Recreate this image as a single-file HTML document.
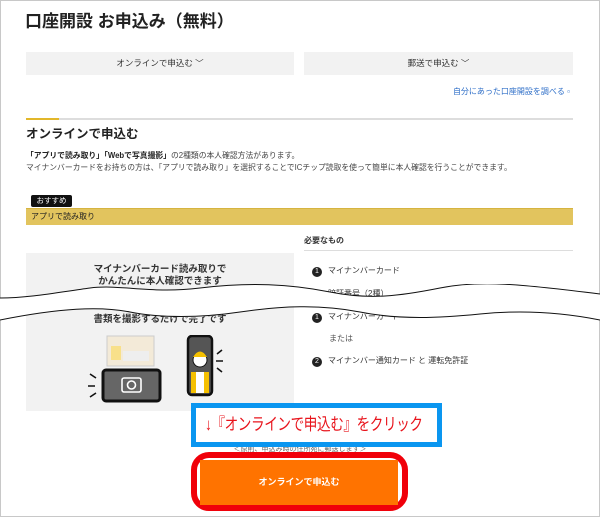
<!DOCTYPE html>
<html><head><meta charset="utf-8"><style>
*{margin:0;padding:0;box-sizing:border-box}
body{width:600px;height:517px;overflow:hidden;background:#fff;font-family:"Liberation Sans","Noto Sans CJK JP",sans-serif;color:#222;position:relative}
.a{position:absolute}
</style></head><body>
<div class="a" style="left:0;top:0;width:600px;height:517px;border:1px solid #c8c8c8"></div>
<div class="a" style="left:25px;top:7px;font-size:17px;font-weight:bold;color:#222">口座開設 お申込み（無料）</div>
<div class="a" style="left:26px;top:52px;width:268px;height:23px;background:#f2f2f2;font-size:8.5px;text-align:center;line-height:23px;color:#333">オンラインで申込む ﹀</div>
<div class="a" style="left:304px;top:52px;width:269px;height:23px;background:#f2f2f2;font-size:8.5px;text-align:center;line-height:23px;color:#333">郵送で申込む ﹀</div>
<div class="a" style="left:420px;top:86px;width:150px;text-align:right;font-size:8px;color:#2f6fc8">自分にあった口座開設を調べる ▫</div>
<div class="a" style="left:26px;top:118px;width:547px;height:2px;background:#ddd"></div>
<div class="a" style="left:26px;top:118px;width:33px;height:2px;background:#e2b72a"></div>
<div class="a" style="left:26px;top:123px;font-size:12.5px;font-weight:bold">オンラインで申込む</div>
<div class="a" style="left:26px;top:150px;font-size:7.8px;line-height:12px;color:#444"><b style="color:#222">「アプリで読み取り」「Webで写真撮影」</b>の2種類の本人確認方法があります。<br>マイナンバーカードをお持ちの方は、「アプリで読み取り」を選択することでICチップ読取を使って簡単に本人確認を行うことができます。</div>
<div class="a" style="left:31px;top:195px;width:41px;height:12px;background:#111;border-radius:2px;color:#fff;font-size:7.5px;text-align:center;line-height:12px">おすすめ</div>
<div class="a" style="left:26px;top:208px;width:547px;height:17px;background:#e2c45e;border-top:1px solid #d6b440;font-size:8px;line-height:16px;padding-left:5px">アプリで読み取り</div>
<div class="a" style="left:304px;top:235px;font-size:8px;font-weight:bold;color:#333">必要なもの</div>
<div class="a" style="left:304px;top:250px;width:269px;height:1px;background:#ddd"></div>
<div class="a" style="left:26px;top:253px;width:268px;height:158px;background:#f2f2f2"></div>
<div class="a" style="left:26px;top:264px;width:268px;text-align:center;font-size:9.5px;font-weight:bold;line-height:12px;color:#333">マイナンバーカード読み取りで<br>かんたんに本人確認できます</div>
<div class="a" style="left:26px;top:311px;width:268px;text-align:center;font-size:9.5px;font-weight:bold;color:#333">書類を撮影するだけで完了です</div>
<div class="a" style="left:312px;top:265px;font-size:8px;color:#333;line-height:11px"><span style="display:inline-block;width:10px;height:10px;border-radius:50%;background:#222;color:#fff;font-size:7px;text-align:center;line-height:10px;margin-right:6px">1</span>マイナンバーカード</div>
<div class="a" style="left:312px;top:288px;font-size:8px;color:#333;line-height:11px"><span style="display:inline-block;width:10px;height:10px;border-radius:50%;background:#222;color:#fff;font-size:7px;text-align:center;line-height:10px;margin-right:6px">2</span>暗証番号（2種）</div>
<div class="a" style="left:312px;top:311px;font-size:8px;color:#333;line-height:11px"><span style="display:inline-block;width:10px;height:10px;border-radius:50%;background:#222;color:#fff;font-size:7px;text-align:center;line-height:10px;margin-right:6px">1</span>マイナンバーカード</div>
<div class="a" style="left:329px;top:333px;font-size:8px;color:#555">または</div>
<div class="a" style="left:312px;top:355px;font-size:8px;color:#333;line-height:11px"><span style="display:inline-block;width:10px;height:10px;border-radius:50%;background:#222;color:#fff;font-size:7px;text-align:center;line-height:10px;margin-right:6px">2</span>マイナンバー通知カード と 運転免許証</div>
<svg class="a" style="left:80px;top:335px" width="170" height="70">
<rect x="27" y="1" width="47" height="30" fill="#f3ead8" stroke="#ccc"/>
<rect x="31" y="11" width="10" height="14" fill="#f8e08a"/>
<rect x="43" y="16" width="26" height="10" fill="#eee"/>
<rect x="23" y="35" width="57" height="31" rx="3" fill="#666" stroke="#111" stroke-width="3"/>
<rect x="42" y="43" width="19" height="14" rx="2" fill="none" stroke="#fff" stroke-width="1.6"/>
<circle cx="51.5" cy="50" r="4" fill="none" stroke="#fff" stroke-width="1.6"/>
<path d="M10 39l6 4M8 51h7M10 62l6-4" stroke="#111" stroke-width="1.6"/>
<rect x="108" y="1" width="24" height="59" rx="4" fill="#555" stroke="#111" stroke-width="2.5"/>
<rect x="111" y="37" width="18" height="21" fill="#f5c000"/>
<rect x="116" y="37" width="8" height="21" fill="#fff"/>
<circle cx="120" cy="25" r="7" fill="#fff" stroke="#111"/>
<path d="M113 22q7-11 14 0" fill="#f5c000"/>
<path d="M142 15l-5 4M143 26h-7M142 37l-5-4" stroke="#111" stroke-width="1.6"/>
</svg>
<svg class="a" style="left:0;top:284px" width="600" height="42">
<path d="M0 14 C30 14 60 8 90 4 S150 10 200 4 S290 0 330 8 S400 12 440 4 S520 0 600 10 L600 36 C560 28 520 24 480 30 S400 36 360 28 S290 20 240 28 S170 34 130 28 S60 24 0 36 Z" fill="#fff"/>
<path d="M0 14 C30 14 60 8 90 4 S150 10 200 4 S290 0 330 8 S400 12 440 4 S520 0 600 10" fill="none" stroke="#111" stroke-width="1"/>
<path d="M0 36 C60 24 100 22 130 28 S200 34 240 28 S320 20 360 28 S440 34 480 30 S560 28 600 36" fill="none" stroke="#111" stroke-width="1"/>
</svg>
<div class="a" style="left:200px;top:444px;width:200px;text-align:center;font-size:7px;color:#666">＜原則、申込み時の住所宛に郵送します＞</div>
<div class="a" style="left:191px;top:403px;width:251px;height:44px;border:5px solid #0a96f0;background:#fff;overflow:hidden"><div style="color:#e8141c;font-size:17px;line-height:33px;white-space:nowrap;transform:scaleX(0.8);transform-origin:0 0;margin-left:9px;letter-spacing:-0.5px">↓『オンラインで申込む』をクリック</div></div>
<div class="a" style="left:191px;top:452px;width:217px;height:59px;border:6px solid #f0000a;border-radius:18px"></div>
<div class="a" style="left:200px;top:460px;width:198px;height:45px;background:#ff7300;color:#fff;font-size:9px;font-weight:bold;text-align:center;line-height:45px">オンラインで申込む</div>
</body></html>
